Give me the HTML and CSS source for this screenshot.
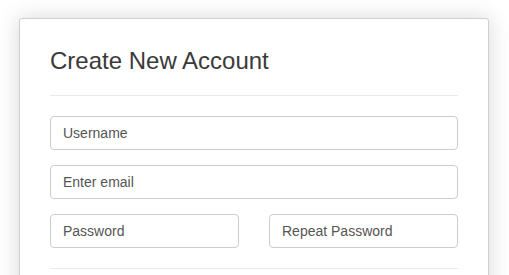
FILE: index.html
```html
<!DOCTYPE html>
<html lang="en">
<head>
<meta charset="utf-8">
<title>Create New Account</title>
<link rel="stylesheet" href="styles.css">
</head>
<body>
<div class="page">
  <form class="card">
    <h3 class="title">Create New Account</h3>
    <hr class="rule">
    <div class="fields">
      <input class="field" type="text" placeholder="Username">
      <input class="field" type="email" placeholder="Enter email">
      <div class="pair">
        <input class="field" type="password" placeholder="Password">
        <input class="field" type="password" placeholder="Repeat Password">
      </div>
    </div>
    <hr class="rule rule-bottom">
  </form>
</div>
</body>
</html>
```
FILE: styles.css
```css
html, body {
  margin: 0;
  padding: 0;
  background: #fff;
  font-family: "Liberation Sans", Arial, Helvetica, sans-serif;
  overflow: hidden;
}
.page {
  padding: 18px 20px 0 19px;
}
.card {
  width: 408px;
  padding: 30px 30px 40px;
  border: 1px solid #cfcfcf;
  border-radius: 3px;
  background: #fff;
  box-shadow: 0 0 22px rgba(0, 0, 0, 0.16);
}
.title {
  margin: 0;
  font-size: 24px;
  line-height: 24px;
  font-weight: 400;
  color: #3a3a3a;
}
.rule {
  margin: 22px 0 20px;
  border: 0;
  border-top: 1px solid #eaeaea;
  height: 0;
}
.rule-bottom {
  margin: 20px 0 0;
}
.fields {
  display: flex;
  flex-direction: column;
  gap: 15px;
}
.pair {
  display: grid;
  grid-template-columns: 1fr 1fr;
  gap: 30px;
}
.field {
  box-sizing: border-box;
  width: 100%;
  height: 34px;
  margin: 0;
  padding: 6px 12px;
  border: 1px solid #cccccc;
  border-radius: 4px;
  font-family: "Liberation Sans", Arial, Helvetica, sans-serif;
  font-size: 14px;
  color: #555;
  background: #fff;
  outline: none;
}
.field::placeholder {
  color: #555;
  opacity: 1;
}
```
